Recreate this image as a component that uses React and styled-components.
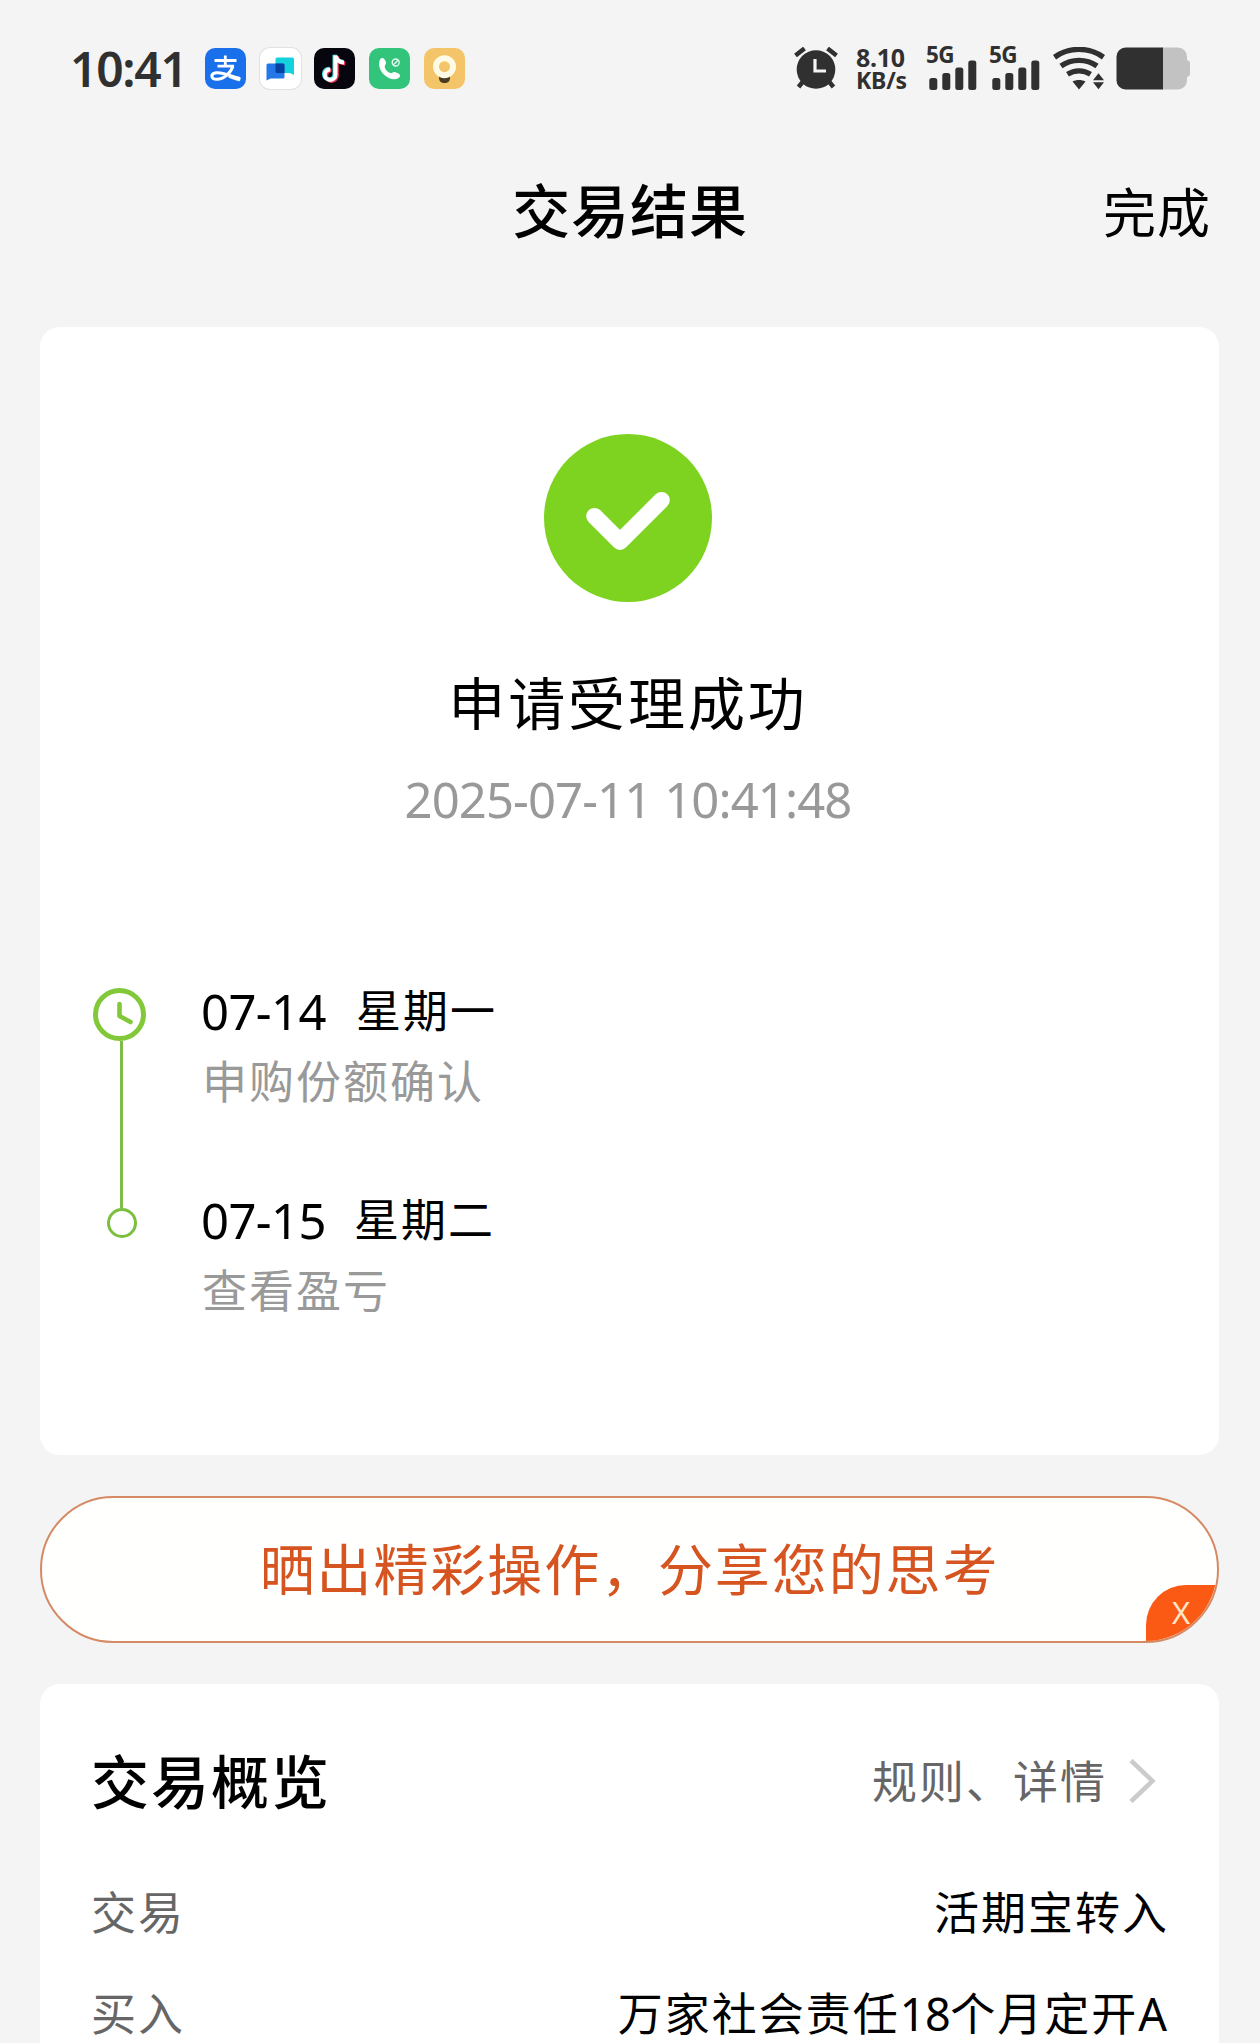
import React from "react";
import styled, { createGlobalStyle } from "styled-components";

const GlobalStyle = createGlobalStyle`
  * { box-sizing: border-box; }
  body {
    margin: 0;
    background: #f4f4f4;
    font-family: "Noto Sans", "Noto Sans CJK SC", sans-serif;
    color: #000;
  }
`;

const Page = styled.div`
  width: 1260px;
  height: 2043px;
  overflow: hidden;
  display: flex;
  flex-direction: column;
  background: #f4f4f4;
`;

/* ---------- status bar ---------- */

const StatusBar = styled.div`
  flex: none;
  height: 137px;
  padding: 0 70px 0 70px;
  display: flex;
  align-items: center;
  justify-content: space-between;
  color: #303030;
`;

const StatusGroup = styled.div`
  display: flex;
  align-items: center;
`;

const Clock = styled.span`
  width: 135px;
  font-size: 48px;
  line-height: 60px;
  font-weight: 600;
  letter-spacing: -1.3px;
  white-space: nowrap;
  padding-top: 1px;
`;

const AppIcons = styled.div`
  display: flex;
  gap: 13.7px;
`;

const AppIcon = styled.div`
  width: 41px;
  height: 41px;
  border-radius: 10px;
  overflow: hidden;
  background: ${(p) => p.$bg};
  box-shadow: ${(p) => (p.$outlined ? "0 0 0 1px #e2e2e2" : "none")};
  svg { display: block; width: 41px; height: 41px; }
`;

const NetSpeed = styled.div`
  width: 53px;
  margin-left: 18px;
  font-weight: 700;
  white-space: nowrap;
`;

const SpeedValue = styled.div`
  font-size: 25px;
  line-height: 23px;
  letter-spacing: -0.3px;
`;

const SpeedUnit = styled.div`
  font-size: 23px;
  line-height: 23px;
  letter-spacing: -0.2px;
`;

const Signal = styled.div`
  width: 51px;
  height: 43px;
  margin-left: ${(p) => p.$gap}px;
  position: relative;
  svg { display: block; }
`;

const SignalLabel = styled.span`
  position: absolute;
  left: -1px;
  top: -3px;
  font-size: 22.5px;
  line-height: 22px;
  font-weight: 700;
  letter-spacing: -0.6px;
`;

/* ---------- header ---------- */

const Header = styled.header`
  flex: none;
  height: 144px;
  margin-bottom: 46px;
  padding: 0 49px;
  display: grid;
  grid-template-columns: 1fr auto 1fr;
  align-items: center;
`;

const PageTitle = styled.h1`
  grid-column: 2;
  margin: 0;
  padding-top: 3px;
  font-size: 58px;
  line-height: 80px;
  font-weight: 500;
  letter-spacing: 0.9px;
`;

const DoneButton = styled.button`
  justify-self: end;
  border: 0;
  padding: 7px 0 0;
  background: none;
  font: inherit;
  font-size: 53px;
  line-height: 80px;
  letter-spacing: 1px;
  color: #000;
`;

/* ---------- cards ---------- */

const Card = styled.section`
  flex: none;
  width: 1179px;
  margin-left: 40px;
  height: ${(p) => p.$height}px;
  border-radius: 20px;
  background: #fff;
`;

const Result = styled.div`
  padding-top: 107px;
  padding-right: 3px;
  display: flex;
  flex-direction: column;
  align-items: center;
  svg { display: block; }
`;

const ResultTitle = styled.h2`
  margin: 61px 0 0;
  font-size: 57px;
  line-height: 80px;
  font-weight: 400;
  letter-spacing: 2.9px;
`;

const ResultTime = styled.div`
  margin-top: 26px;
  font-size: 49px;
  line-height: 60px;
  letter-spacing: -0.9px;
  word-spacing: 1px;
  color: #999;
`;

const Timeline = styled.div`
  margin-top: 147px;
  padding-left: 53px;
  display: flex;
  gap: 55px;
`;

const Rail = styled.div`
  width: 53px;
  padding-top: 12px;
  display: flex;
  flex-direction: column;
  align-items: center;
  svg { display: block; flex: none; }
`;

const RailLine = styled.div`
  width: 3px;
  height: 167px;
  margin-left: 4px;
  background: #7fbb4a;
`;

const RailDot = styled.div`
  width: 30px;
  height: 30px;
  margin-left: 5px;
  border: 3px solid #7cbf3f;
  border-radius: 50%;
`;

const Steps = styled.div`
  display: flex;
  flex-direction: column;
  gap: 69px;
`;

const StepDate = styled.div`
  display: flex;
  gap: ${(p) => p.$gap}px;
  font-size: 45px;
  line-height: 70px;
  letter-spacing: 2px;
`;

const StepDay = styled.span`
  font-size: 49px;
  letter-spacing: -0.6px;
`;

const StepNote = styled.div`
  padding-left: 1px;
  margin: 1px 0 -1px;
  font-size: 45px;
  line-height: 70px;
  letter-spacing: 2px;
  color: #999;
`;

/* ---------- share button ---------- */

const ShareButton = styled.div`
  flex: none;
  position: relative;
  width: 1179px;
  height: 147px;
  margin: 41px 0 41px 40px;
  padding-bottom: 2px;
  border: 2px solid #d58a64;
  border-radius: 74px;
  overflow: hidden;
  background: #fffffe;
  display: flex;
  align-items: center;
  justify-content: center;
  font-size: 55px;
  line-height: 80px;
  letter-spacing: 1.9px;
  color: #d65420;
`;

const CloseCorner = styled.span`
  position: absolute;
  right: 0;
  bottom: 0;
  width: 71px;
  height: 56px;
  padding: 0 0 0 26px;
  border-top-left-radius: 40px;
  background: #fa5a14;
  color: #ffe6c8;
  font-size: 31px;
  line-height: 54px;
`;

/* ---------- overview ---------- */

const OverviewHead = styled.div`
  padding: 57px 63px 0 51px;
  margin-bottom: 40px;
  display: flex;
  align-items: center;
  justify-content: space-between;
  svg { margin-top: -1px; }
`;

const OverviewTitle = styled.h2`
  margin: 0;
  padding-top: 1px;
  font-size: 58px;
  line-height: 80px;
  font-weight: 500;
  letter-spacing: 2px;
`;

const DetailLink = styled.div`
  display: flex;
  align-items: center;
  gap: 22px;
  font-size: 45px;
  line-height: 80px;
  letter-spacing: 2px;
  color: #666;
`;

const Row = styled.div`
  height: 101.5px;
  padding: 0 50px 0 51px;
  display: flex;
  align-items: center;
  justify-content: space-between;
  font-size: 45px;
  line-height: 70px;
  letter-spacing: 2px;
`;

const RowLabel = styled.span`
  color: #666;
`;

const RowValue = styled.span`
  white-space: nowrap;
`;

const Tight = styled.span`
  letter-spacing: -0.5px;
`;

/* ---------- drawings ---------- */

const PayGlyph = () => (
  <svg viewBox="0 0 41 41" fill="none" stroke="#fff">
    <path d="M9.500 12.500h22M12.500 18.200h16.500M20.300 7.500v10.500" strokeWidth="2.800" />
    <path d="M28 18C26 24.500 19 31.200 12 31.200c-6.500 0-6.800-5.600-1-6.400 7.500-1 15 3.800 24 5.700" strokeWidth="3" />
    <path d="M26.500 27.500c3 1.100 5.500 1.800 9 2.500l-1 3c-3.500-.8-7-2-11-3.800z" fill="#fff" strokeWidth=".6" />
  </svg>
);

const ChatGlyph = () => (
  <svg viewBox="0 0 41 41">
    <path d="M17 9.500h15.500a1.500 1.500 0 0 1 1.500 1.500v16l-4-2H17a1.500 1.500 0 0 1-1.500-1.500V11A1.500 1.500 0 0 1 17 9.500z" fill="#13d2dc" />
    <path d="M8 15.500h15a1.500 1.500 0 0 1 1.500 1.500v12a1.500 1.500 0 0 1-1.500 1.500H10.500l-4 2V17A1.500 1.500 0 0 1 8 15.500z" fill="#2477e6" />
    <path d="M15.500 15.500H23a1.500 1.500 0 0 1 1.500 1.500v8H17a1.500 1.500 0 0 1-1.500-1.500z" fill="#06419f" />
  </svg>
);

const NotePath = "M21.500 7.500v19.200a5.300 5.300 0 1 1-5.300-5.300M21.500 7.500c.6 4 3.400 6.600 8.500 7";

const NoteGlyph = () => (
  <svg viewBox="0 0 41 41" fill="none" strokeWidth="4">
    <path d={NotePath} stroke="#f2385a" transform="translate(1.300 .9)" />
    <path d={NotePath} stroke="#45e0e0" transform="translate(-1 -.7)" />
    <path d={NotePath} stroke="#fff" />
  </svg>
);

const CallGlyph = () => (
  <svg viewBox="0 0 41 41" fill="none">
    <path
      d="M11 11.500c1-1.600 3-2.200 4.300-.6l1.700 3.200c.8 1.800-1.600 3-1.300 4.700.5 3 3 5.500 5.800 6.300 1.700.4 2.600-1.600 4.500-1.100l4 1.700c1.700 1 1.200 3.200-.3 4.200-3.700 2.500-9.300 1.500-13.700-2.300C10.500 22.800 8.800 16.500 11 11.500z"
      fill="#fff"
    />
    <circle cx="26.700" cy="14.500" r="3.500" stroke="#e9fff3" strokeWidth="1.300" />
    <path d="M24.500 16.800l4.500-4.500" stroke="#e9fff3" strokeWidth="1.300" />
  </svg>
);

const BulbGlyph = () => (
  <svg viewBox="0 0 41 41" fill="none">
    <path d="M15 27h11v3c0 3-2 5-5.500 5S15 33 15 30z" fill="#4a3c20" />
    <circle cx="20.500" cy="18.700" r="8.500" stroke="#fffae6" strokeWidth="6" />
  </svg>
);

const AlarmGlyph = () => (
  <svg width="44" height="43" viewBox="0 0 44 43" fill="none">
    <path d="M9.500 34l-5 6M34.500 34l5 6" stroke="#303030" strokeWidth="4.500" />
    <path d="M1.500 8.500l9-7M42.500 8.500l-9-7" stroke="#303030" strokeWidth="4.600" />
    <circle cx="22" cy="22.500" r="19.300" fill="#303030" />
    <path d="M21 12v12h11" stroke="#f4f4f4" strokeWidth="3.200" />
  </svg>
);

const SignalBars = () => (
  <svg width="51" height="43" viewBox="0 0 51 43" fill="#303030">
    <rect x="2.300" y="31" width="8" height="12" rx="2.500" />
    <rect x="15.300" y="26" width="8" height="17" rx="2.500" />
    <rect x="28.300" y="20.500" width="8" height="22.500" rx="2.500" />
    <rect x="41.300" y="13.500" width="8" height="29.500" rx="2.500" />
  </svg>
);

const WifiGlyph = () => (
  <svg width="52" height="43" viewBox="0 0 52 43" fill="none">
    <path d="M1.500 10.200C16-.2 36-.2 50.500 10.200" stroke="#303030" strokeWidth="5.400" />
    <path d="M8 19c10.500-7.500 25.500-7.500 36 0" stroke="#303030" strokeWidth="5.400" />
    <path d="M14.500 27.200c7-4.500 16-4.500 23 0" stroke="#303030" strokeWidth="5.200" />
    <path d="M19.500 34.500c4-2 9-2 13 0L26 42.500z" fill="#303030" />
    <path d="M45.500 26.300l5.500 7H40zM45.500 42.300l5.500-7H40z" fill="#303030" />
  </svg>
);

const BatteryGlyph = () => (
  <svg width="74" height="43" viewBox="0 0 74 43">
    <path d="M46 .5h16a9 9 0 0 1 9 9V13c1.800.3 3 1.500 3 3v11c0 1.500-1.200 2.700-3 3v3.500a9 9 0 0 1-9 9H46z" fill="#c2c2c2" />
    <path d="M9.500.5H47v42H9.500a9 9 0 0 1-9-9v-24a9 9 0 0 1 9-9z" fill="#303030" />
  </svg>
);

const Gap = styled.span`
  width: ${(p) => p.$w}px;
`;

const SuccessMark = () => (
  <svg width="168" height="168" viewBox="0 0 168 168" fill="none">
    <circle cx="84" cy="84" r="84" fill="#7ed321" />
    <path d="M50.500 82.200L76 107.700l41.500-41.500" stroke="#fff" strokeWidth="16.600" strokeLinecap="round" strokeLinejoin="round" />
  </svg>
);

const ClockMark = () => (
  <svg width="53" height="53" viewBox="0 0 53 53" fill="none" stroke="#82c93a">
    <circle cx="26.500" cy="26.500" r="24" strokeWidth="5" />
    <path d="M26.500 16v12l11 6" strokeWidth="4.600" strokeLinecap="round" strokeLinejoin="round" />
  </svg>
);

const Chevron = () => (
  <svg width="27" height="44" viewBox="0 0 27 44" fill="none">
    <path d="M2 1.500L23.500 22 2 42.500" stroke="#cbcbcb" strokeWidth="4.500" />
  </svg>
);

const steps = [
  { day: "07-14", week: "星期一", note: "申购份额确认", gap: 30 },
  { day: "07-15", week: "星期二", note: "查看盈亏", gap: 28 },
];

const rows = [
  { label: "交易", value: "活期宝转入" },
  { label: "买入", value: <>万家社会责任<Tight>18</Tight>个月定开A</> },
];

export default function App() {
  return (
    <Page>
      <GlobalStyle />
      <StatusBar>
        <StatusGroup>
          <Clock>10:41</Clock>
          <AppIcons>
            <AppIcon $bg="#1a70ea"><PayGlyph /></AppIcon>
            <AppIcon $bg="#fff" $outlined><ChatGlyph /></AppIcon>
            <AppIcon $bg="#07060f"><NoteGlyph /></AppIcon>
            <AppIcon $bg="#31c47a"><CallGlyph /></AppIcon>
            <AppIcon $bg="#f3c468"><BulbGlyph /></AppIcon>
          </AppIcons>
        </StatusGroup>
        <StatusGroup>
          <AlarmGlyph />
          <NetSpeed>
            <SpeedValue>8.10</SpeedValue>
            <SpeedUnit>KB/s</SpeedUnit>
          </NetSpeed>
          <Signal $gap={18}><SignalLabel>5G</SignalLabel><SignalBars /></Signal>
          <Signal $gap={12}><SignalLabel>5G</SignalLabel><SignalBars /></Signal>
          <Gap $w={12} />
          <WifiGlyph />
          <Gap $w={11} />
          <BatteryGlyph />
        </StatusGroup>
      </StatusBar>

      <Header>
        <PageTitle>交易结果</PageTitle>
        <DoneButton>完成</DoneButton>
      </Header>

      <Card $height={1128}>
        <Result>
          <SuccessMark />
          <ResultTitle>申请受理成功</ResultTitle>
          <ResultTime>2025-07-11 10:41:48</ResultTime>
        </Result>
        <Timeline>
          <Rail>
            <ClockMark />
            <RailLine />
            <RailDot />
          </Rail>
          <Steps>
            {steps.map((s) => (
              <div key={s.day}>
                <StepDate $gap={s.gap}>
                  <StepDay>{s.day}</StepDay>
                  <span>{s.week}</span>
                </StepDate>
                <StepNote>{s.note}</StepNote>
              </div>
            ))}
          </Steps>
        </Timeline>
      </Card>

      <ShareButton>
        晒出精彩操作，分享您的思考
        <CloseCorner>X</CloseCorner>
      </ShareButton>

      <Card $height={400}>
        <OverviewHead>
          <OverviewTitle>交易概览</OverviewTitle>
          <DetailLink>
            规则、详情
            <Chevron />
          </DetailLink>
        </OverviewHead>
        {rows.map((r) => (
          <Row key={r.label}>
            <RowLabel>{r.label}</RowLabel>
            <RowValue>{r.value}</RowValue>
          </Row>
        ))}
      </Card>
    </Page>
  );
}
